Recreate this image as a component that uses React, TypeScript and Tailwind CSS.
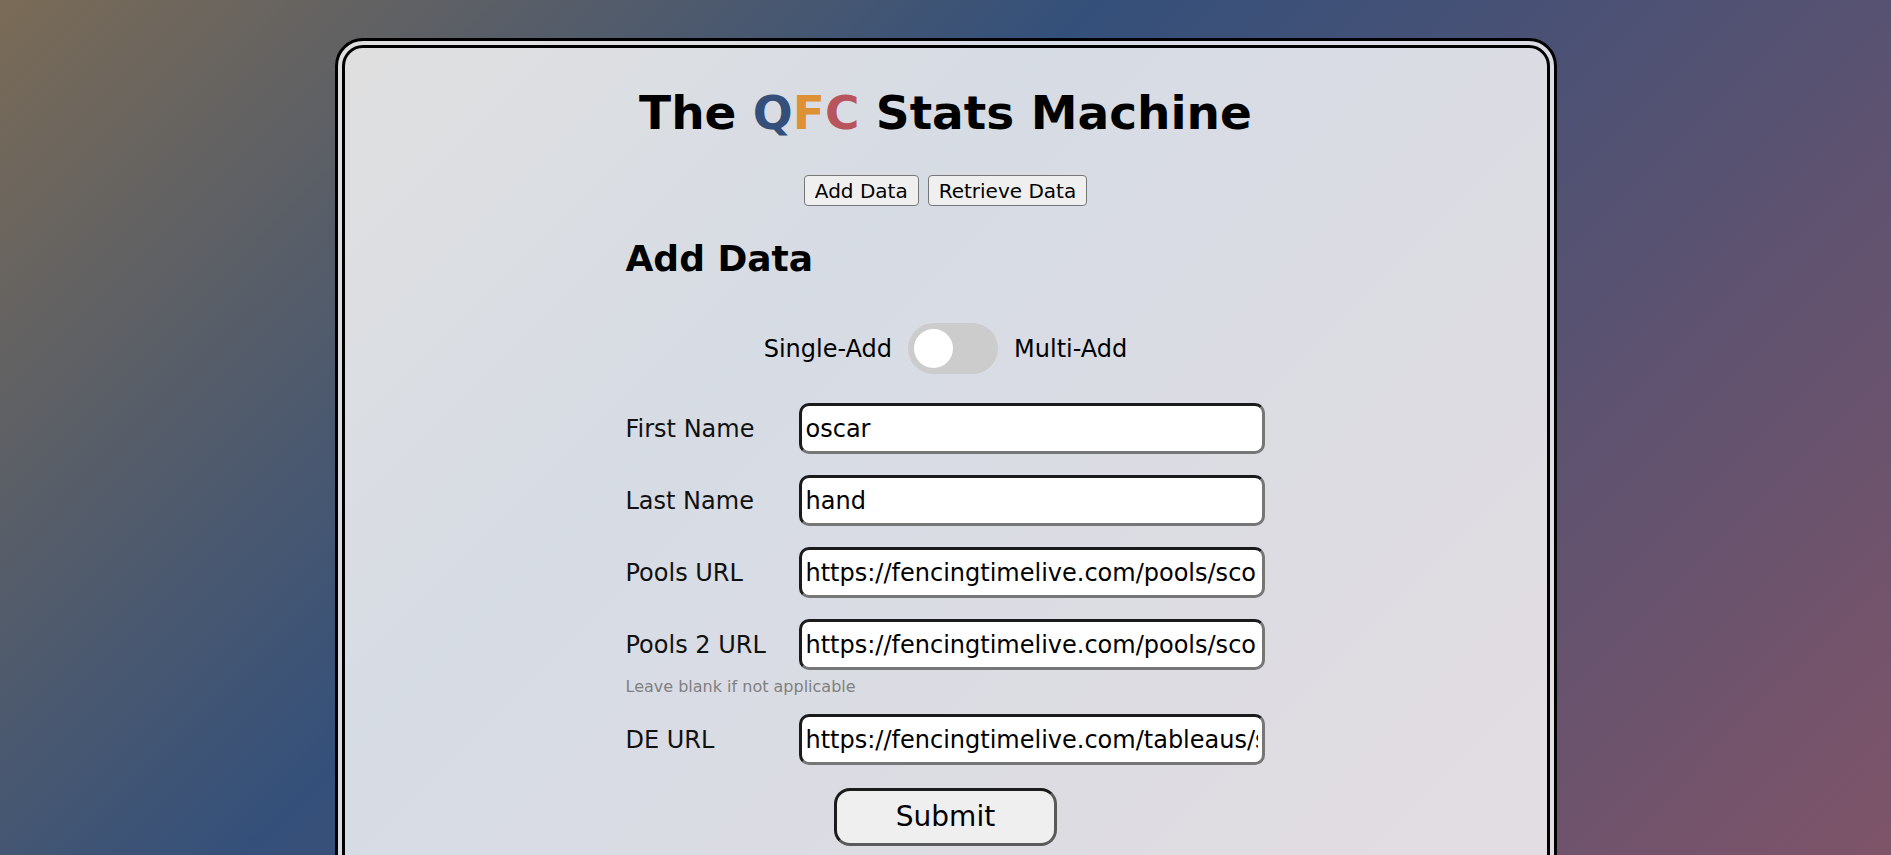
import { useState } from "react";

const fields = [
  { label: "First Name", value: "oscar" },
  { label: "Last Name", value: "hand" },
  { label: "Pools URL", value: "https://fencingtimelive.com/pools/scores/1A2B3C4D5E6F" },
  { label: "Pools 2 URL", value: "https://fencingtimelive.com/pools/scores/7G8H9I0J1K2L", hint: "Leave blank if not applicable" },
  { label: "DE URL", value: "https://fencingtimelive.com/tableaus/scores/3M4N5O6P" },
];

const Toggle = ({ on, onClick }: { on: boolean; onClick: () => void }) => (
  <button
    type="button"
    onClick={onClick}
    className={`relative h-[51px] w-[90px] rounded-full ${on ? "bg-[#2196f3]" : "bg-[#cccccc]"}`}
  >
    <span
      className={`absolute top-[6px] h-[39px] w-[39px] rounded-full bg-white ${on ? "left-[45px]" : "left-[6px]"}`}
    />
  </button>
);

export default function App() {
  const [multi, setMulti] = useState(false);

  return (
    <div className="min-h-screen bg-fixed bg-[linear-gradient(135deg,#7a6b56_0%,#34507a_40%,#7e5468_100%)] pt-[38px] pb-[60px] font-['DejaVu_Sans','Verdana',sans-serif] text-black">
      <div className="mx-auto w-[1222px] rounded-[28px] border-[10px] border-double border-black bg-white/80 pt-[37px] pb-[80px]">
        <h1 className="text-center text-[47px] font-bold leading-[56px]">
          The <span className="text-[#34507a]">Q</span>
          <span className="text-[#de9035]">F</span>
          <span className="text-[#b8545c]">C</span> Stats Machine
        </h1>

        <div className="mt-[34px] flex justify-center gap-[9px]">
          <button className="h-[31px] rounded-[4px] border border-[#767676] bg-[#efefef] px-[10px] text-[20px] leading-none">
            Add Data
          </button>
          <button className="h-[31px] rounded-[4px] border border-[#767676] bg-[#efefef] px-[10px] text-[20px] leading-none">
            Retrieve Data
          </button>
        </div>

        <div className="mx-auto mt-[32px] w-[640px]">
          <h2 className="text-[36px] font-bold leading-[42px]">Add Data</h2>

          <div className="mt-[43px] flex items-center justify-center gap-[16px] text-[24px]">
            <span>Single-Add</span>
            <Toggle on={multi} onClick={() => setMulti(!multi)} />
            <span>Multi-Add</span>
          </div>

          <form className="mt-[29px] flex flex-col" onSubmit={(e) => e.preventDefault()}>
            {fields.map((f, i) => (
              <div key={f.label} className={i === 0 ? "" : f.label === "DE URL" ? "mt-[18px]" : "mt-[21px]"}>
                <div className="flex items-center">
                  <label className="w-[173px] shrink-0 text-[24px] text-[#111]">{f.label}</label>
                  <input
                    defaultValue={f.value}
                    className="h-[51px] w-[466px] rounded-[10px] border-[3px] border-t-[#1b1b1b] border-l-[#1b1b1b] border-b-[#767676] border-r-[#767676] bg-white px-[4px] text-[24px] outline-none"
                  />
                </div>
                {f.hint && <p className="mt-[7px] text-[16px] leading-[19px] text-[#808080]">{f.hint}</p>}
              </div>
            ))}

            <div className="mt-[23px] flex justify-center">
              <button
                type="submit"
                className="h-[58px] w-[223px] rounded-[16px] border-[3px] border-t-[#1b1b1b] border-l-[#1b1b1b] border-b-[#5a5a5a] border-r-[#5a5a5a] bg-[#efefef] text-[28px]"
              >
                Submit
              </button>
            </div>
          </form>
        </div>
      </div>
    </div>
  );
}
